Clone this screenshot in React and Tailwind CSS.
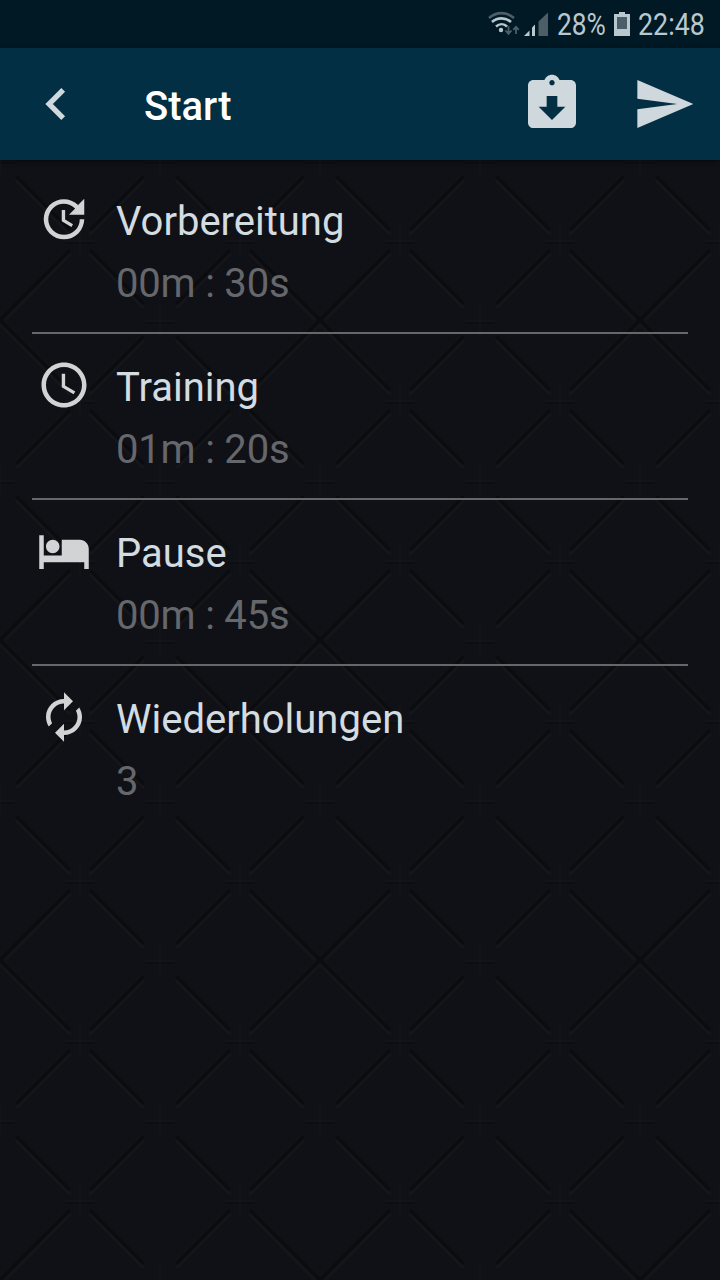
import {
    MdNavigateBefore,
    MdAssignmentReturned,
    MdSend,
    MdUpdate,
    MdSchedule,
    MdHotel,
    MdAutorenew
} from 'react-icons/md'

const settings = [
    { id: 'prepare', icon: MdUpdate, label: 'Vorbereitung', value: '00m : 30s' },
    { id: 'training', icon: MdSchedule, label: 'Training', value: '01m : 20s' },
    { id: 'pause', icon: MdHotel, label: 'Pause', value: '00m : 45s' },
    { id: 'repeat', icon: MdAutorenew, label: 'Wiederholungen', value: '3' }
]

// seams stop short of every mark and only cross at the corners of the 320px tile
const seams = [
    'M0 0L70 70M90 90L144 144M176 176L230 230M250 250L320 320',
    'M320 0L250 70M230 90L176 144M144 176L90 230M70 250L0 320',
    'M176 16L230 70M250 90L304 144M16 176L70 230M90 250L144 304',
    'M144 16L90 70M70 90L16 144M304 176L250 230M230 250L176 304'
]

const marks = [
    [160, 0], [160, 320], [0, 160], [320, 160], [160, 160],
    [80, 80], [240, 80], [80, 240], [240, 240]
]

function QuiltedBackground() {
    return (
        <svg className="absolute inset-0 h-full w-full" aria-hidden="true">
            <defs>
                <pattern id="quilt" width="320" height="320" patternUnits="userSpaceOnUse">
                    <g fill="none">
                        <path d={seams.join('')} stroke="#15161a" strokeWidth="3" transform="translate(0 4)" />
                        <path d={seams.join('')} stroke="#0d0e12" strokeWidth="4.5" />
                        <path d={seams.join('')} stroke="#0a0b0f" strokeWidth="2" />
                    </g>
                    {marks.map(([x, y]) => (
                        <g key={`${x}-${y}`} strokeWidth="2">
                            <path d={`M${x - 15} ${y + 3}h30`} stroke="#0d0e12" />
                            <path d={`M${x - 15} ${y + 1}h30M${x} ${y - 15}v30`} stroke="#131419" />
                        </g>
                    ))}
                </pattern>
            </defs>
            <rect width="100%" height="100%" fill="#101116" />
            <rect width="100%" height="100%" fill="url(#quilt)" />
        </svg>
    )
}

function StatusIcons() {
    return (
        <svg className="h-12 w-16 shrink-0" viewBox="0 0 64 48" fill="none">
            {/* Wifi */}
            <path d="M1 18C8.500 11.500 18.500 11.500 26 18" stroke="#4c5f69" strokeWidth="2.600" />
            <path d="M4 22C9.500 17.200 17.500 17.200 23 22" stroke="#b9c7cf" strokeWidth="2.600" />
            <path d="M8 26.500C11.500 23.500 16 23.500 19 26.500" stroke="#b9c7cf" strokeWidth="2.500" />
            <circle cx="13" cy="30" r="2.200" fill="#b9c7cf" />
            <path d="M20.500 26v7.500M17.500 30.500l3 3.300 3-3.300M28 34v-7M25.200 29.800L28 26.800l2.800 3" stroke="#4c5f69" strokeWidth="1.800" />
            {/* Mobile signal */}
            <path d="M36 36l5.500-5.500V36z" fill="#b9c7cf" />
            <path d="M44 27.500l3-3V36h-3z" fill="#b9c7cf" />
            <path d="M50.500 21.500l9.500-9V36h-9.500z" fill="#4c5f69" />
        </svg>
    )
}

function BatteryIcon() {
    return (
        <svg className="h-12 w-4 shrink-0" viewBox="0 0 16 48">
            <path d="M5 12h6v2h5v22H0V14h5z" fill="#b9c7cf" />
            <path d="M3 17h10v12H3z" fill="#4c5f69" />
        </svg>
    )
}

function StatusBar() {
    return (
        <div className="flex h-12 items-center bg-[#001924] pl-[488px] text-[31px] leading-[48px] text-[#b9c7cf]">
            <StatusIcons />
            <div className="ml-[5px] w-[49px]">
                <span className="inline-block origin-left scale-x-[.85] pt-0.5">28%</span>
            </div>
            <div className="ml-2">
                <BatteryIcon />
            </div>
            <div className="ml-2 w-[69px]">
                <span className="inline-block origin-left scale-x-[.865] pt-0.5">22:48</span>
            </div>
        </div>
    )
}

function Header() {
    return (
        <header className="flex h-28 items-center bg-[#022f43] pr-6 pl-6 text-[#cfd8dc] shadow-[0_1px_4px_rgba(0,0,0,0.6)]">
            <button type="button" aria-label="Zurück">
                <MdNavigateBefore className="size-16" />
            </button>
            <h1 className="ml-14 flex-1 pt-1.5 text-[40px] leading-[48px] font-medium text-white">Start</h1>
            <button type="button" aria-label="Speichern">
                <MdAssignmentReturned className="size-16" />
            </button>
            <button type="button" aria-label="Senden" className="ml-12">
                <MdSend className="size-16" />
            </button>
        </header>
    )
}

function SettingRow({ icon: Icon, label, value }) {
    return (
        <li className="flex h-[166px] border-b-2 border-[#66676a] pt-[23px] pl-[5px] last:border-b-0">
            <Icon className="mt-px size-[54px] shrink-0 text-[#d2d3d4]" />
            <div className="ml-[25px] text-[40px] leading-[62px]">
                <div className="text-[#d3dce0]">{label}</div>
                <div className="tracking-[-0.2px] text-[#66676b]">{value}</div>
            </div>
        </li>
    )
}

export default function App() {
    return (
        <div className="relative h-[1280px] w-[720px] overflow-hidden bg-[#101116] font-['Roboto',sans-serif]">
            <QuiltedBackground />
            <div className="relative">
                <StatusBar />
                <Header />
                <ul className="px-8 pt-2">
                    {settings.map((item) => (
                        <SettingRow key={item.id} icon={item.icon} label={item.label} value={item.value} />
                    ))}
                </ul>
            </div>
        </div>
    )
}
